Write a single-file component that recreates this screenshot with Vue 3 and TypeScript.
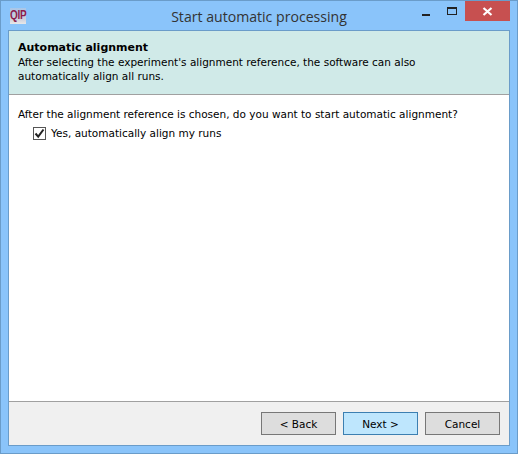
<template>
  <div class="window">
    <div class="titlebar">
      <span class="app-icon" aria-hidden="true"><span class="app-icon-text">QIP</span></span>
      <span class="window-title">{{ title }}</span>
      <div class="window-controls">
        <span class="control control--min"><i></i></span>
        <span class="control control--max"><i></i></span>
        <span class="control control--close">
          <svg width="11" height="9" viewBox="0 0 11 9" aria-hidden="true">
            <path d="M1.5 1 L9.5 8 M9.5 1 L1.5 8" stroke="#fff" stroke-width="2.2" fill="none" />
          </svg>
        </span>
      </div>
    </div>
    <div class="client">
      <header class="page-header">
        <h1>Automatic alignment</h1>
        <p>After selecting the experiment's alignment reference, the software can also<br />automatically align all runs.</p>
      </header>
      <main class="page-body">
        <p>After the alignment reference is chosen, do you want to start automatic alignment?</p>
        <label class="check">
          <input v-model="autoAlign" type="checkbox" />
          <span class="check-box">
            <svg v-if="autoAlign" width="11" height="11" viewBox="0 0 11 11" aria-hidden="true">
              <path d="M1.5 5.5 L4.2 8.6 L9.5 1.5" stroke="#222" stroke-width="2" fill="none" />
            </svg>
          </span>
          <span>Yes, automatically align my runs</span>
        </label>
      </main>
      <footer class="page-footer">
        <button type="button" class="btn">&lt; Back</button>
        <button type="button" class="btn btn--default">Next &gt;</button>
        <button type="button" class="btn">Cancel</button>
      </footer>
    </div>
  </div>
</template>

<script setup lang="ts">
import { ref } from 'vue';

const title = 'Start automatic processing';
const autoAlign = ref(true);
</script>

<style>
html,
body {
  margin: 0;
  background: #8ac4fa;
}
</style>

<style scoped>
.window {
  box-sizing: border-box;
  width: 518px;
  height: 454px;
  display: flex;
  flex-direction: column;
  background: #8ac4fa;
  border: 1px solid #6a9cc9;
  padding: 0 7px 7px;
  font-family: "DejaVu Sans", sans-serif;
  font-size: 10.5px;
  color: #000;
}

.titlebar {
  position: relative;
  height: 29px;
  flex-shrink: 0;
  display: flex;
  align-items: center;
  justify-content: center;
}

.app-icon {
  position: absolute;
  left: 2px;
  top: 7px;
  width: 16px;
  height: 16px;
  background: linear-gradient(#a9c6e8, #cfd0dc 70%, #e8e8e8);
  text-align: center;
}

.app-icon-text {
  display: inline-block;
  font-family: "Liberation Sans", sans-serif;
  font-size: 10px;
  font-weight: 700;
  line-height: 14px;
  letter-spacing: -0.3px;
  color: #8c1c4c;
  transform: scaleY(1.3);
}

.window-title {
  font-family: "Open Sans", sans-serif;
  font-size: 14.1px;
  color: #333;
  margin-top: 2px;
}

.window-controls {
  position: absolute;
  right: 0;
  top: 0;
  display: flex;
}

.control {
  height: 20px;
  display: flex;
  align-items: center;
  justify-content: center;
}

.control--min {
  width: 26px;
}

.control--min i {
  width: 8px;
  height: 2px;
  margin-top: 7px;
  background: #222;
}

.control--max {
  width: 26px;
}

.control--max i {
  box-sizing: border-box;
  width: 10px;
  height: 8px;
  border: 1px solid #222;
  border-top-width: 2px;
}

.control--close {
  width: 45px;
  background: #c75050;
}

.client {
  flex: 1;
  display: flex;
  flex-direction: column;
  border: 1px solid #6a9cc9;
  background: #fff;
  min-height: 0;
}

.page-header {
  height: 64px;
  box-sizing: border-box;
  padding: 10px 9px 0;
  background: #d0eae8;
  border-bottom: 1px solid #a0a0a0;
  line-height: 14px;
  flex-shrink: 0;
}

.page-header h1 {
  margin: 0;
  font-size: 11px;
  font-weight: 700;
}

.page-header p {
  margin: 0;
}

.page-body {
  flex: 1;
  padding: 12px 9px 0;
  line-height: 14px;
}

.page-body p {
  margin: 0;
}

.check {
  display: flex;
  align-items: center;
  gap: 5px;
  margin: 5px 0 0 15px;
}

.check input {
  display: none;
}

.check-box {
  box-sizing: border-box;
  width: 13px;
  height: 13px;
  border: 1px solid #555;
  background: #fff;
  display: flex;
  align-items: center;
  justify-content: center;
}

.page-footer {
  height: 44px;
  box-sizing: border-box;
  display: flex;
  justify-content: flex-end;
  align-items: flex-start;
  gap: 7px;
  padding: 10px 9px 0 0;
  background: #f0f0f0;
  border-top: 1px solid #a0a0a0;
  flex-shrink: 0;
}

.btn {
  width: 75px;
  height: 23px;
  padding: 0;
  font: inherit;
  color: #000;
  background: #dddddd;
  border: 1px solid #777;
}

.btn--default {
  background: #bee6fd;
  border-color: #3c7fb1;
}
</style>
